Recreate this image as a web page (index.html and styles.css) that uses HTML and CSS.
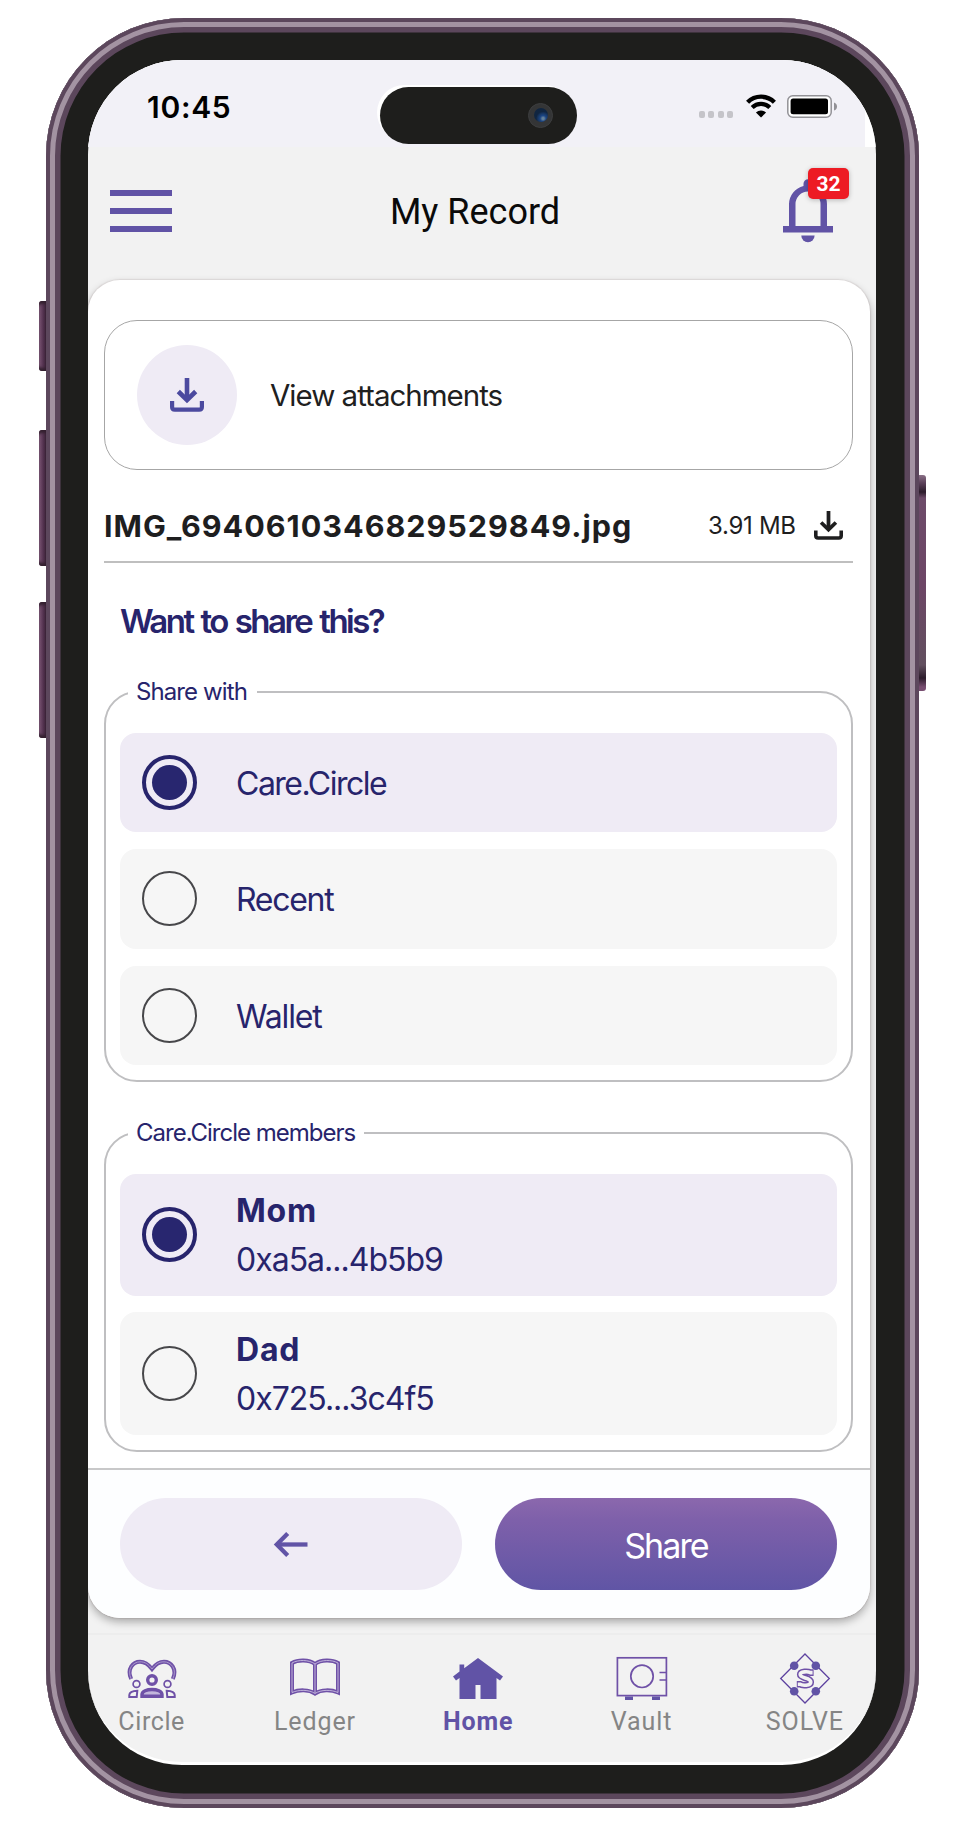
FILE: index.html
```
<!DOCTYPE html>
<html lang="en">
<head>
<meta charset="utf-8">
<title>My Record</title>
<link rel="stylesheet" href="styles.css">
</head>
<body>
<div class="phone">
  <span class="key key-mute"></span>
  <span class="key key-up"></span>
  <span class="key key-down"></span>
  <span class="key key-power"></span>
  <div class="screen">
    <div class="status">
      <span class="time">10:45</span>
      <div class="island"><span class="camera"><i></i></span></div>
      <div class="indicators">
        <span class="dots"><i></i><i></i><i></i><i></i></span>
        <svg class="wifi" viewBox="0 0 30 23" width="30" height="23">
          <path d="M1.6 7.2 A19 19 0 0 1 28.4 7.2" fill="none" stroke="#000" stroke-width="4.4"/>
          <path d="M6.2 12.6 A12.4 12.4 0 0 1 23.8 12.6" fill="none" stroke="#000" stroke-width="4.2"/>
          <path d="M15 22.6 L9.9 17.6 A7.2 7.2 0 0 1 20.1 17.6 Z"/>
        </svg>
        <svg class="battery" viewBox="0 0 50 23" width="50" height="23">
          <rect x=".8" y=".8" width="43.4" height="21.4" rx="5" fill="#fff" stroke="#929196" stroke-width="1.5"/>
          <rect x="3.6" y="3.4" width="37.4" height="15.8" rx="2.5"/>
          <path d="M47 7.5 Q50 8.5 50 11.5 Q50 14.5 47 15.5 Z" fill="#929196"/>
        </svg>
      </div>
    </div>
    <header class="header">
      <div class="menu"><i></i><i></i><i></i></div>
      <h1>My Record</h1>
      <div class="bell">
        <svg viewBox="0 0 50 63" width="50" height="63" fill="#6153a6">
          <path d="M20.5 7 V4.8 A4.6 4.6 0 0 1 29.7 4.8 V7 A19 19 0 0 1 44 25 V47 H50 V53.5 H0 V47 H6 V25 A19 19 0 0 1 20.5 7 Z M12.5 47 H37.5 V25 A12.5 12.5 0 0 0 12.5 25 Z" fill-rule="evenodd"/>
          <path d="M18.3 56.5 H31.6 A6.6 6.6 0 0 1 18.3 56.5 Z"/>
        </svg>
        <span class="badge">32</span>
      </div>
    </header>
    <main class="card">
      <div class="content">
        <div class="attachments">
          <span class="round">
            <svg viewBox="0 0 34 34" width="34" height="34" fill="none" stroke="#4c4a9f">
              <path d="M17 0 V22" stroke-width="4.6"/><path d="M8.3 13.5 L17 22 L25.7 13.5" stroke-width="4.6"/>
              <path d="M2.1 23 V29 Q2.1 31.6 4.8 31.6 H29.2 Q31.9 31.6 31.9 29 V23" stroke-width="4.2"/>
            </svg>
          </span>
          <span class="view">View attachments</span>
        </div>
        <div class="file">
          <span class="name">IMG_6940610346829529849.jpg</span>
          <span class="size">3.91 MB</span>
          <svg viewBox="0 0 34 34" width="29" height="29" fill="none" stroke="#1e1e1f">
            <path d="M17 0 V21" stroke-width="4.4"/><path d="M8.3 13.5 L17 21.8 L25.7 13.5" stroke-width="4.4"/>
            <path d="M2.1 23 V29 Q2.1 31.6 4.8 31.6 H29.2 Q31.9 31.6 31.9 29 V23" stroke-width="4.2"/>
          </svg>
        </div>
        <h2>Want to share this?</h2>
        <fieldset class="group share-with">
          <legend><span>Share with</span></legend>
          <div class="option on"><i class="radio"></i><span class="opt-care">Care.Circle</span></div>
          <div class="option"><i class="radio"></i><span class="opt-recent">Recent</span></div>
          <div class="option"><i class="radio"></i><span class="opt-wallet">Wallet</span></div>
        </fieldset>
        <fieldset class="group members">
          <legend><span>Care.Circle members</span></legend>
          <div class="option on"><i class="radio"></i><p><b>Mom</b><span class="address">0xa5a...4b5b9</span></p></div>
          <div class="option"><i class="radio"></i><p><b>Dad</b><span class="address">0x725...3c4f5</span></p></div>
        </fieldset>
      </div>
      <div class="actions">
        <div class="button back">
          <svg viewBox="0 0 34 25" width="34" height="25" fill="none" stroke="#6153a6" stroke-width="4.3"><path d="M33.5 12.5 H3.5"/><path d="M13.7 1.5 L2.8 12.5 L13.7 23.5"/></svg>
        </div>
        <div class="button share"><span>Share</span></div>
      </div>
    </main>
    <nav class="tabs">
      <div class="tab">
        <svg viewBox="0 0 50 52" width="50" height="52" fill="none" stroke="#6f51a7">
          <path d="M4.2 26 C-.5 16 6 8.8 13 8.8 C18.5 8.8 21.5 11.5 25 16 C28.5 11.5 31.5 8.8 37 8.8 C44 8.8 50.5 16 45.8 26" stroke-width="4"/>
          <path d="M4.2 26 C-.5 16 6 8.8 13 8.8 C18.5 8.8 21.5 11.5 25 16 C28.5 11.5 31.5 8.8 37 8.8 C44 8.8 50.5 16 45.8 26" stroke="#b9a9d6" stroke-width=".8"/>
          <circle cx="25" cy="27" r="4.3" stroke-width="3.4"/>
          <circle cx="9.5" cy="31" r="3.4" stroke-width="1.7"/><circle cx="40.5" cy="31" r="3.4" stroke-width="1.7"/>
          <path d="M2.3 44 V42 Q2.5 38 10.3 37.8 L9.7 44 Z M47.7 44 V42 Q47.5 38 39.7 37.8 L40.3 44 Z" stroke-width="2"/>
          <path d="M15 43.2 V41.5 C15 34.8 35 34.8 35 41.5 V43.2 Z" fill="#c3b6dc" stroke-width="3.4"/>
        </svg>
        <span class="t-circle">Circle</span>
      </div>
      <div class="tab">
        <svg viewBox="0 0 50 52" width="50" height="52" fill="none" stroke="#6f51a7">
          <path d="M25 11 C19 6.5 8 6.5 2 10 V39.5 C9 36.5 19 36.5 25 40.5 C31 36.5 41 36.5 48 39.5 V10 C42 6.5 31 6.5 25 11 Z M25 11 V40" stroke-width="4"/>
          <path d="M25 11 C19 6.5 8 6.5 2 10 V39.5 C9 36.5 19 36.5 25 40.5 C31 36.5 41 36.5 48 39.5 V10 C42 6.5 31 6.5 25 11 Z M25 11 V40" stroke="#c9bde0" stroke-width=".9"/>
        </svg>
        <span class="t-ledger">Ledger</span>
      </div>
      <div class="tab active">
        <svg viewBox="0 0 50 52" width="50" height="52" fill="#6153a6"><path d="M25 5 L50 23.5 L47 27.5 L43.5 25 V46 H27.5 V32 H22.5 V46 H6.5 V25 L3 27.5 L0 23.5 L6.5 18.6 V11.5 H11.2 V15.2 Z"/></svg>
        <span class="t-home">Home</span>
      </div>
      <div class="tab">
        <svg viewBox="0 0 52 52" width="52" height="52" fill="none" stroke="#6f51a7" stroke-width="1.7">
          <rect x="1.4" y="4.8" width="49" height="37.8"/><circle cx="26" cy="23.3" r="11.2"/><path d="M43.5 19.5 H51 M43.5 27 H51"/>
          <path d="M9 43.4 H17 V47 H9 Z M36 43.4 H44 V47 H36 Z" fill="#6153a6" stroke="none"/>
        </svg>
        <span class="t-vault">Vault</span>
      </div>
      <div class="tab">
        <svg viewBox="0 0 50 52" width="50" height="52" fill="none" stroke="#5e43a0" stroke-width="1.3">
          <path d="M25 1 L49.3 25.5 L25 50 L.7 25.5 Z"/>
          <g fill="#6153a6" stroke="none"><circle cx="14.2" cy="12.8" r="4.3"/><circle cx="35.8" cy="12.8" r="4.3"/><circle cx="14.2" cy="38.2" r="4.3"/><circle cx="35.8" cy="38.2" r="4.3"/></g>
          <path d="M33.6 19.6 H30.5 C28 18.4 20.2 18.2 20.2 21.6 C20.2 25.6 30.8 24.4 30.8 29 C30.8 33 22 32.8 20 31.2 H16.8" stroke="#6f51a7" stroke-width="6.6"/>
          <path d="M32.6 19.6 H30.5 C28 18.4 20.2 18.2 20.2 21.6 C20.2 25.6 30.8 24.4 30.8 29 C30.8 33 22 32.8 20 31.2 H17.8" stroke="#f2f2f2" stroke-width="3.6"/>
        </svg>
        <span class="t-solve">SOLVE</span>
      </div>
    </nav>
  </div>
</div>
</body>
</html>
```
FILE: styles.css
```
* { box-sizing: border-box; }
body { margin: 0; background: #fff; font-family: Inter, "Liberation Sans", sans-serif; white-space: nowrap; height: 1825px; overflow: hidden; }
h1, h2, p { margin: 0; }
svg { display: block; flex: none; overflow: visible; }

/* device frame */
.phone {
  position: relative; width: 873px; height: 1790px; margin: 18px 0 0 46px; padding: 42px 43px 43px 42px;
  border-radius: 138px; background: #1e1e1c;
  box-shadow: inset 0 0 0 4px #5c475c, inset 0 0 0 9px #a393a2, inset 0 0 0 14.5px #5c475c;
}
.screen { height: 1705px; border-radius: 94px; overflow: hidden; background: #f2f2f2; border-bottom: 3px solid #fff; display: flex; flex-direction: column; }
.key {
  position: absolute; left: -7px; width: 7px; border-radius: 3px 0 0 3px;
  background: linear-gradient(90deg, #7b5574, #53324f 60%, #3c2339);
  box-shadow: inset 0 5px 3px -2px #33202f, inset 0 -5px 3px -2px #33202f;
}
.key-mute { top: 283px; height: 70px; }
.key-up { top: 412px; height: 136px; }
.key-down { top: 584px; height: 136px; }
.key-power { left: auto; right: -7px; top: 457px; height: 216px; border-radius: 0 3px 3px 0; background: linear-gradient(#8a7086 0, #5c415a 8px, #2c1c2b 17px, #6d4b69 23px, #6d4666 110px, #62505f 190px, #2c1c2b 203px, #784e71 212px); box-shadow: none; }

/* status bar */
.status { height: 87px; flex: none; display: grid; grid-template-columns: 292px 197px 1fr; background: linear-gradient(#f2f1f7, #f2f1f7) 0 0 / 777px 100% no-repeat #fff; }
.time { padding-left: 59px; margin-top: 27px; font-weight: 600; font-size: 30px; line-height: 40px; letter-spacing: .7px; color: #000; }
.island { width: 197px; height: 57.5px; margin-top: 26.5px; border-radius: 29px; background: #1e1e1c; box-shadow: -4px -3px 0 -1px #fff; padding: 16px 24px; display: flex; justify-content: flex-end; }
.camera { width: 25px; height: 25px; border-radius: 50%; background: #343536; display: grid; place-items: center; border: 1px solid #3d3e3f; }
.camera i { width: 14px; height: 14px; border-radius: 50%; background: radial-gradient(circle at 65% 75%, #64819a 0 1px, #1b4584 3px, #173764 5px, #102540 7px); }
.indicators { display: flex; align-items: flex-start; padding: 35px 0 0 121.5px; }
.dots { display: flex; gap: 3.6px; padding-top: 16px; width: 36px; margin-right: 11px; }
.dots i { width: 6px; height: 7px; border-radius: 2px; background: #c5c4c9; flex: none; }
.wifi { margin-right: 11px; }

/* header */
.header { height: 133px; flex: none; display: grid; grid-template-columns: 62px 1fr 50px; padding: 0 43px 0 22px; }
.menu { padding-top: 43px; display: flex; flex-direction: column; gap: 12px; }
.menu i { height: 6px; background: #6153a6; }
.header h1 { margin-top: 45px; padding-right: 5px; text-align: center; font: 400 36px/40px Roboto, sans-serif; color: #0a0a0a; }
.bell { position: relative; padding-top: 32px; }
.badge { position: absolute; left: 25px; top: 21px; width: 41px; height: 31px; border-radius: 5px; background: #ed1b24; color: #fff; font: 700 21px/32px Roboto, sans-serif; text-align: center; box-shadow: 0 1px 5px rgba(0,0,0,.25); }

/* record card */
.card { width: 782px; height: 1338px; flex: none; border-radius: 32px; background: #fff; overflow: hidden; box-shadow: 0 4px 9px rgba(0,0,0,.3), 0 0 1px 1px rgba(120,80,80,.1); }
.content { height: 1188px; padding: 39.5px 17px 0 16px; }
.attachments { height: 150px; border: 1.5px solid #a6a6a6; border-radius: 33px; padding-left: 32px; display: flex; align-items: center; color: #202020; }
.round { width: 100px; height: 100px; border-radius: 50%; background: #efebf5; display: grid; place-items: center; margin-right: 33px; }
.view { font-size: 29.5px; letter-spacing: -1px; padding-top: 1px; }
.file { height: 93.5px; border-bottom: 2px solid #bfbfbf; display: flex; align-items: center; padding: 21px 10px 0 0; color: #1e1e1f; }
.name { font-size: 30.5px; font-weight: 700; letter-spacing: 1px; width: 604px; }
.size { font-size: 24px; letter-spacing: -.3px; width: 106px; }
h2 { margin: 38px 0 0 16px; font-size: 33px; line-height: 40px; font-weight: 600; letter-spacing: -2.5px; word-spacing: 2px; color: #27246c; }
.group { margin: 0; min-width: 0; border: 2px solid #bfbfc1; border-radius: 33px; padding: 0 14px; color: #27246c; }
.group legend { margin-left: 8px; padding: 0 8px; font-size: 24px; line-height: 24px; letter-spacing: -.9px; width: 129px; }
.share-with { margin-top: 39px; height: 402px; }
.members { margin-top: 39px; height: 330.5px; }
.members legend { width: 236px; letter-spacing: -1px; }
.option { height: 99.6px; margin-bottom: 17px; border-radius: 16px; background: #f6f6f6; display: flex; align-items: center; padding-left: 21.5px; font-size: 32px; letter-spacing: -1px; }
.option.on { background: #efebf5; }
legend + .option { margin-top: 28.5px; }
.members .option { height: 122.6px; margin-bottom: 16.4px; }
.radio { width: 55px; height: 55px; border-radius: 50%; border: 2px solid #47474a; margin-right: 39.5px; display: grid; place-items: center; }
.on .radio { border: 4.4px solid #27246c; }
.on .radio::after { content: ""; width: 35px; height: 35px; border-radius: 50%; background: #28266f; }
.option b, .option p span { display: block; line-height: 49px; }
.option b { letter-spacing: .8px; }
.opt-care { letter-spacing: -1.5px; }
.opt-recent { letter-spacing: -1.3px; }
.opt-wallet { letter-spacing: -1.15px; }
.option > span { padding-top: 2px; }
.actions { height: 150px; border-top: 2px solid #c8c8c9; background: #fdfeff; padding: 28px 33px 0 32px; display: grid; grid-template-columns: 342px 342px; gap: 33px; }
.button { height: 92px; border-radius: 46px; display: grid; place-items: center; }
.back { background: #efebf5; }
.share { background: linear-gradient(#8b68ad, #7e60aa 24%, #6055a5); color: #fff; font-size: 34px; letter-spacing: -1.9px; }
.share span { padding-top: 2px; }

/* tab bar */
.tabs { width: 816.5px; margin: 15px 0 0 -18px; border-top: 2px solid #ededed; display: grid; grid-template-columns: repeat(5, 1fr); padding-top: 18px; }
.tab { display: flex; flex-direction: column; align-items: center; font: 400 25px/30px Roboto, sans-serif; color: #858585; letter-spacing: .9px; }
.tab span { margin-top: 2px; }
.active { color: #6153a6; font-weight: 700; }
.t-circle { letter-spacing: .6px; }
```
